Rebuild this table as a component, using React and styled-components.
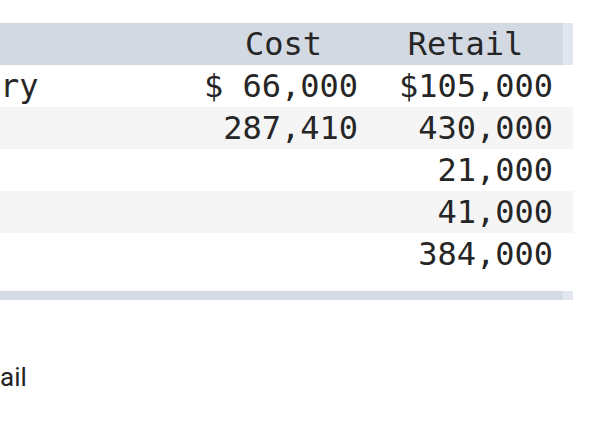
import styled, { createGlobalStyle } from 'styled-components';

const GlobalStyle = createGlobalStyle`
    html, body {
        margin: 0;
        padding: 0;
        background: #ffffff;
    }
    body {
        font-family: "DejaVu Sans Mono", "Liberation Mono", monospace;
        color: #222222;
    }
`;

const Page = styled.div`
    width: 597px;
    height: 424px;
    overflow: hidden;
    padding-top: 23px;
    box-sizing: border-box;
`;

const Table = styled.table`
    border-collapse: collapse;
    table-layout: fixed;
    width: 573px;
    font-family: "DejaVu Sans Mono", monospace;
    font-size: 32px;
    color: #262626;
`;

const HeadRow = styled.tr`
    height: 42px;
    background: #d3d9e3;
`;

const HeadCell = styled.th`
    padding: 0;
    font-weight: 400;
    text-align: center;
    vertical-align: middle;
    background: ${props => props.$strip ? '#e2e6ef' : 'transparent'};
`;

const Row = styled.tr`
    height: ${props => props.$gap ? '16px' : '42px'};
    background: ${props => props.$shaded ? '#f5f5f5' : '#ffffff'};
`;

const Cell = styled.td`
    padding: 0 ${props => props.$label ? '0' : '10px'} 0 0;
    text-align: ${props => props.$label ? 'left' : 'right'};
    vertical-align: middle;
    white-space: pre;
    line-height: 1;
`;

const FootRow = styled.tr`
    height: 9px;
    background: #d5dae4;
`;

const FootCell = styled.td`
    padding: 0;
    background: ${props => props.$strip ? '#e2e6ef' : 'transparent'};
`;

const Note = styled.p`
    margin: 64px 0 0 0;
    font-family: Roboto, "Open Sans", sans-serif;
    font-size: 26px;
    line-height: 1;
    color: #222222;
`;

const rows = [
    { label: 'ry', cost: '$ 66,000', retail: '$105,000' },
    { label: '', cost: '287,410', retail: '430,000' },
    { label: '', cost: '', retail: '21,000' },
    { label: '', cost: '', retail: '41,000' },
    { label: '', cost: '', retail: '384,000' },
];

const App = () => {
    return (
        <Page>
            <GlobalStyle />
            <Table>
                <colgroup>
                    <col style={{ width: 199 }} />
                    <col style={{ width: 169 }} />
                    <col style={{ width: 195 }} />
                    <col style={{ width: 10 }} />
                </colgroup>
                <thead>
                    <HeadRow>
                        <HeadCell />
                        <HeadCell>Cost</HeadCell>
                        <HeadCell>Retail</HeadCell>
                        <HeadCell $strip />
                    </HeadRow>
                </thead>
                <tbody>
                    {rows.map((r, i) => (
                        <Row key={i} $shaded={i % 2 === 1}>
                            <Cell $label>{r.label}</Cell>
                            <Cell>{r.cost}</Cell>
                            <Cell>{r.retail}</Cell>
                            <Cell $label />
                        </Row>
                    ))}
                    <Row $gap>
                        <Cell $label />
                        <Cell />
                        <Cell />
                        <Cell $label />
                    </Row>
                </tbody>
                <tfoot>
                    <FootRow>
                        <FootCell />
                        <FootCell />
                        <FootCell />
                        <FootCell $strip />
                    </FootRow>
                </tfoot>
            </Table>
            <Note>ail</Note>
        </Page>
    );
};

export default App;
